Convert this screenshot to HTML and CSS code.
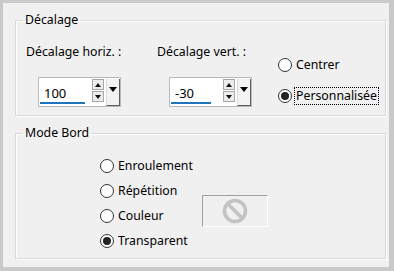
FILE: index.html
```html
<!DOCTYPE html>
<html lang="fr">
<head>
    <meta charset="UTF-8">
    <title>Décalage</title>
    <link rel="stylesheet" href="styles.css">
</head>
<body>
    <div class="frame">
        <fieldset class="group group-offset">
            <legend>Décalage</legend>
            <div class="offset-grid">
                <div class="field">
                    <div class="field-label">Décalage horiz. :</div>
                    <div class="spin">
                        <span class="spin-value">100</span>
                        <span class="spin-line" style="width: 45px;"></span>
                        <div class="spin-arrows">
                            <span class="arrow-btn"><span class="tri-up"></span></span>
                            <span class="arrow-btn"><span class="tri-down"></span></span>
                        </div>
                        <span class="drop-btn"><span class="tri-drop"></span></span>
                    </div>
                </div>
                <div class="field">
                    <div class="field-label">Décalage vert. :</div>
                    <div class="spin">
                        <span class="spin-value">-30</span>
                        <span class="spin-line" style="width: 40px;"></span>
                        <div class="spin-arrows">
                            <span class="arrow-btn"><span class="tri-up"></span></span>
                            <span class="arrow-btn"><span class="tri-down"></span></span>
                        </div>
                        <span class="drop-btn"><span class="tri-drop"></span></span>
                    </div>
                </div>
                <div class="radio-list radio-list-offset">
                    <div class="radio-row"><span class="radio"></span><span class="radio-text">Centrer</span></div>
                    <div class="radio-row"><span class="radio checked"></span><span class="radio-text focused">Personnalisée</span></div>
                </div>
            </div>
        </fieldset>

        <fieldset class="group group-mode">
            <legend>Mode Bord</legend>
            <div class="mode-grid">
                <div class="radio-list">
                    <div class="radio-row"><span class="radio"></span><span class="radio-text">Enroulement</span></div>
                    <div class="radio-row"><span class="radio"></span><span class="radio-text">Répétition</span></div>
                    <div class="radio-row"><span class="radio"></span><span class="radio-text">Couleur</span></div>
                    <div class="radio-row"><span class="radio checked"></span><span class="radio-text">Transparent</span></div>
                </div>
                <div class="swatch">
                    <svg width="64" height="30" viewBox="0 0 64 30">
                        <circle cx="32" cy="15" r="10.5" fill="none" stroke="#c3c3c3" stroke-width="3.6"/>
                        <line x1="24.5" y1="7.5" x2="39.5" y2="22.5" stroke="#c3c3c3" stroke-width="3.6"/>
                    </svg>
                </div>
            </div>
        </fieldset>
    </div>
</body>
</html>
```

FILE: styles.css
```css
body {
    margin: 0;
    font-family: 'Noto Sans', 'Open Sans', sans-serif;
    font-size: 12.3px;
    color: #000;
}

.frame {
    width: 386px;
    height: 264px;
    border-style: solid;
    border-color: #c9c9c9;
    border-width: 3px 5px 4px 3px;
    background-color: #f0f0f0;
    overflow: hidden;
}

.group {
    margin: 0 0 0 12px;
    padding: 0;
    width: 369px;
    border: 1px solid #d9d9d9;
    box-shadow: inset 1px 1px 0 #fff, 1px 1px 0 #fff;
    min-width: 0;
}

.group legend {
    margin-left: 7px;
    padding: 0 2px;
    font-size: 12.3px;
    line-height: 16px;
}

.group-offset {
    margin-top: 9px;
    height: 102px;
}

.group-mode {
    margin-top: 9px;
    height: 132px;
}

/* Décalage */
.offset-grid {
    display: grid;
    grid-template-columns: 131px 121px auto;
    padding: 16px 0 0 10px;
}

.field-label {
    line-height: 16px;
    white-space: nowrap;
}

.spin {
    position: relative;
    display: flex;
    align-items: flex-start;
    margin: 17px 0 0 12px;
    width: 81px;
    height: 28px;
    border: 1px solid #b9b9b9;
    background-color: #fff;
}

.spin-value {
    flex: 1;
    padding: 7px 0 0 5px;
    font-size: 13px;
    line-height: 16px;
}

.spin-line {
    position: absolute;
    left: 1px;
    bottom: 2px;
    height: 2px;
    background-color: #1e74bd;
}

.spin-arrows {
    display: flex;
    flex-direction: column;
    gap: 1px;
    margin: 1px 2px 0 0;
}

.arrow-btn {
    display: flex;
    align-items: center;
    justify-content: center;
    width: 10px;
    height: 9px;
    border: 1px solid #a8a8a8;
    background-color: #ececec;
}

.tri-up,
.tri-down,
.tri-drop {
    width: 0;
    height: 0;
    border-left: 3px solid transparent;
    border-right: 3px solid transparent;
}

.tri-up {
    border-bottom: 4px solid #111;
}

.tri-down {
    border-top: 4px solid #111;
}

.drop-btn {
    display: flex;
    justify-content: center;
    align-items: flex-start;
    width: 12px;
    height: 26px;
    margin-top: 1px;
    border-left: 1px solid #dadada;
    border-right: 1px solid #5f5f5f;
    border-bottom: 1px solid #5f5f5f;
    background-color: #f3f3f3;
}

.tri-drop {
    margin-top: 8px;
    border-left-width: 4px;
    border-right-width: 4px;
    border-top: 5px solid #000;
}

/* radios */
.radio-list {
    display: flex;
    flex-direction: column;
    gap: 7px;
}

.radio-list-offset {
    margin-top: 12px;
    gap: 13px;
}

.radio-row {
    display: flex;
    align-items: center;
    height: 18px;
    white-space: nowrap;
}

.radio {
    box-sizing: border-box;
    width: 14px;
    height: 14px;
    border: 1px solid #333;
    border-radius: 50%;
    background-color: #fff;
    display: flex;
    align-items: center;
    justify-content: center;
}

.radio.checked::after {
    content: "";
    width: 8px;
    height: 8px;
    border-radius: 50%;
    background-color: #222;
}

.radio-text {
    margin-left: 2px;
    padding: 0 1px;
    line-height: 16px;
    border: 1px dotted transparent;
}

.radio-text.focused {
    border-color: #000;
}

/* Mode Bord */
.mode-grid {
    display: grid;
    grid-template-columns: 102px auto;
    padding: 16px 0 0 84px;
}

.swatch {
    margin-top: 38px;
    width: 64px;
    height: 30px;
    border-style: solid;
    border-width: 1px;
    border-color: #a0a0a0 #fff #fff #a0a0a0;
}

.swatch svg {
    display: block;
}
```
